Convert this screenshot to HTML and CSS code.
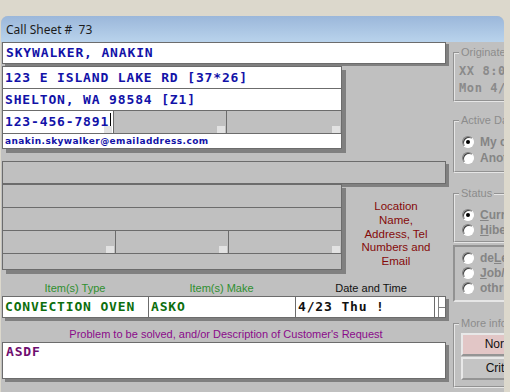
FILE: index.html
```html
<!DOCTYPE html>
<html lang="en">
<head>
<meta charset="UTF-8">
<title>Call Sheet</title>
<link rel="stylesheet" href="styles.css">
</head>
<body>
<div class="window">
  <div class="titlebar">Call Sheet #  73</div>
  <div class="client">
    <div class="main">
      <div class="field name mono">SKYWALKER, ANAKIN</div>

      <div class="block block-a">
        <div class="row tall mono">123 E ISLAND LAKE RD [37*26]</div>
        <div class="row tall mono">SHELTON, WA 98584 [Z1]</div>
        <div class="row tall3 cells">
          <div class="cell white mono">123-456-7891<span class="caret"></span><span class="grip"></span></div>
          <div class="cell"><span class="grip"></span></div>
          <div class="cell last"><span class="grip"></span></div>
        </div>
        <div class="row email">anakin.skywalker@emailaddress.com</div>
      </div>

      <div class="field wide"></div>

      <div class="lower">
        <div class="block block-b">
          <div class="row tall3 gray"></div>
          <div class="row tall3 gray"></div>
          <div class="row tall3 cells">
            <div class="cell gray"><span class="grip"></span></div>
            <div class="cell gray"><span class="grip"></span></div>
            <div class="cell gray last"><span class="grip"></span></div>
          </div>
          <div class="row short gray"></div>
        </div>
        <div class="location">Location<br>Name,<br>Address, Tel<br>Numbers and<br>Email</div>
      </div>

      <div class="labels">
        <span class="lbl-type">Item(s) Type</span>
        <span class="lbl-make">Item(s) Make</span>
        <span class="lbl-date">Date and Time</span>
      </div>
      <div class="items">
        <div class="item type mono">CONVECTION OVEN</div>
        <div class="item make mono">ASKO</div>
        <div class="item date mono">4/23 Thu !</div>
        <div class="spin"><span></span><span></span></div>
      </div>

      <div class="problem-label">Problem to be solved, and/or Description of Customer's Request</div>
      <div class="field problem mono">ASDF</div>
    </div>

    <div class="side">
      <fieldset class="group orig">
        <legend>Originated</legend>
        <div class="orig-line mono">XX 8:07 AM</div>
        <div class="orig-line mono">Mon 4/23</div>
      </fieldset>

      <fieldset class="group active">
        <legend>Active Date</legend>
        <div class="radio"><span class="dot on"></span>My call</div>
        <div class="radio"><span class="dot"></span>Another</div>
      </fieldset>

      <fieldset class="group status">
        <legend>Status</legend>
        <div class="radio"><span class="dot on"></span><u>C</u>urrent</div>
        <div class="radio"><span class="dot"></span><u>H</u>ibernate</div>
      </fieldset>

      <div class="sunken">
        <div class="radio"><span class="dot"></span>de<u>L</u>eted</div>
        <div class="radio"><span class="dot"></span><u>J</u>ob/Done</div>
        <div class="radio"><span class="dot"></span>othr</div>
      </div>

      <fieldset class="group more">
        <legend>More info</legend>
        <div class="btn pink">Normal</div>
        <div class="btn">Critical</div>
      </fieldset>
    </div>
  </div>
</div>
</body>
</html>
```

FILE: styles.css
```css
body {
  margin: 0;
  overflow: hidden;
  background-color: #dcd8cc;
  font-family: "Liberation Sans", Arial, sans-serif;
}

.window {
  margin-top: 16px;
  margin-left: 1px;
  width: 503px;
  height: 376px;
  border-radius: 7px 7px 0 0;
  overflow: hidden;
  background-color: #c0c0c0;
}

.titlebar {
  height: 26px;
  line-height: 27px;
  padding-left: 5px;
  background: linear-gradient(#9bb7da, #b9d3ec);
  font-family: "Noto Sans", "Open Sans", sans-serif;
  font-size: 12px;
  color: #1c1c1c;
  white-space: pre;
}

.client {
  display: flex;
  height: 350px;
}

.main {
  flex: none;
  width: 448px;
  padding-left: 1px;
}

.side {
  flex: none;
  width: 54px;
  overflow: hidden;
}

/* monospace data font */
.mono {
  font-family: "DejaVu Sans Mono", "Liberation Mono", monospace;
  font-weight: bold;
  font-size: 13px;
  letter-spacing: 0.85px;
  white-space: nowrap;
}

.field {
  box-sizing: border-box;
  border: 1px solid #6c6c6c;
  background-color: #fff;
}

.name {
  width: 444px;
  height: 22px;
  line-height: 20px;
  padding-left: 3px;
  color: #1212a8;
  box-shadow: 3px 2px 0 #808080;
}

.block {
  box-sizing: border-box;
  width: 340px;
  border: 1px solid #6c6c6c;
  border-bottom: none;
  box-shadow: 4px 4px 0 #808080;
}

.block-a {
  margin-top: 2px;
}

.row {
  box-sizing: border-box;
  border-bottom: 1px solid #6c6c6c;
  background-color: #fff;
  color: #1212a8;
  padding-left: 2px;
}

.row.tall {
  height: 22px;
  line-height: 21px;
}

.row.tall3 {
  height: 23px;
  line-height: 22px;
}

.row.short {
  height: 16px;
}

.row.gray {
  background-color: #c0c0c0;
}

.row.email {
  height: 15px;
  line-height: 14px;
  font-family: "DejaVu Sans", Verdana, sans-serif;
  font-weight: bold;
  font-size: 9px;
  letter-spacing: 0.42px;
  color: #1212a8;
}

.cells {
  display: flex;
  padding-left: 0;
  background-color: #c0c0c0;
}

.cell {
  position: relative;
  box-sizing: border-box;
  width: 113px;
  border-right: 1px solid #6c6c6c;
  padding-left: 2px;
}

.cell.white {
  width: 111px;
  background-color: #fff;
}

.cell.last {
  width: 114px;
  border-right: none;
}

.block-b .cell {
  width: 113px;
}

.block-b .cell.last {
  width: 112px;
}

.grip {
  position: absolute;
  right: 1px;
  bottom: 0;
  width: 8px;
  height: 7px;
  background-color: #e2e2e2;
}

.caret {
  display: inline-block;
  width: 1px;
  height: 17px;
  margin-left: 1px;
  vertical-align: -4px;
  background-color: #000;
}

.wide {
  margin-top: 12px;
  width: 444px;
  height: 23px;
  background-color: #c0c0c0;
  box-shadow: 3px 3px 0 #808080;
}

.lower {
  display: flex;
}

.location {
  width: 100px;
  margin-left: 4px;
  padding-top: 16px;
  text-align: center;
  font-size: 11.5px;
  line-height: 13.8px;
  color: #850a0a;
}

.labels {
  display: flex;
  margin-top: 10px;
  height: 16px;
  line-height: 16px;
  font-size: 11px;
}

.labels span {
  text-align: center;
}

.lbl-type {
  width: 146px;
  color: #2f8f2f;
}

.lbl-make {
  width: 147px;
  color: #2f8f2f;
}

.lbl-date {
  width: 152px;
  color: #111;
}

.items {
  display: flex;
  width: 444px;
  height: 22px;
  box-shadow: 3px 3px 0 #808080;
}

.item {
  box-sizing: border-box;
  height: 22px;
  line-height: 20px;
  padding-left: 2px;
  border: 1px solid #6c6c6c;
  border-right: none;
  background-color: #fff;
}

.item.type {
  width: 146px;
  color: #0d6e0d;
}

.item.make {
  width: 147px;
  color: #0d6e0d;
}

.item.date {
  width: 139px;
  color: #111;
}

.spin {
  display: flex;
  flex-direction: column;
  box-sizing: border-box;
  width: 12px;
  border: 1px solid #6c6c6c;
  background-color: #fff;
}

.spin span {
  flex: 1;
  border-left: 1px solid #808080;
  margin-left: 3px;
}

.spin span:first-child {
  border-bottom: 1px solid #808080;
}

.problem-label {
  margin-top: 8px;
  height: 16px;
  line-height: 16px;
  text-align: center;
  font-size: 11px;
  color: #8a0a8a;
}

.problem {
  width: 444px;
  height: 37px;
  padding: 1px 3px;
  color: #6e0d6e;
  line-height: 16px;
  box-shadow: 3px 3px 0 #808080;
}

/* right hand panel */
.group {
  width: 90px;
  margin: 4px 0 0 3px;
  padding: 0 0 0 4px;
  border: 2px groove #e6e6e6;
  min-inline-size: auto;
}

.group legend {
  padding: 0 2px;
  font-size: 11px;
  line-height: 13px;
  color: #8c8c8c;
  white-space: nowrap;
}

.orig {
  padding-top: 4px;
  padding-bottom: 3px;
}

.orig-line {
  height: 17px;
  line-height: 17px;
  font-size: 12px;
  letter-spacing: 0.6px;
  color: #8a8a8a;
}

.active {
  margin-top: 12px;
  padding-top: 7px;
  padding-bottom: 5px;
}

.status {
  margin-top: 14px;
  padding-top: 7px;
  padding-bottom: 4px;
}

.status .radio {
  height: 15px;
}

.sunken {
  box-sizing: border-box;
  width: 90px;
  height: 57px;
  margin: 2px 0 0 3px;
  padding-top: 3px;
  padding-left: 4px;
  border: 2px inset #e6e6e6;
}

.sunken .radio {
  height: 15px;
}

.radio {
  display: flex;
  align-items: center;
  height: 16px;
  padding-left: 3px;
  font-size: 12px;
  font-weight: bold;
  color: #858585;
  white-space: nowrap;
}

.dot {
  box-sizing: border-box;
  position: relative;
  flex: none;
  width: 12px;
  height: 12px;
  margin-right: 6px;
  border-radius: 50%;
  border: 1px solid;
  border-color: #808080 #fff #fff #808080;
  background-color: #fff;
  box-shadow: inset 1px 1px 0 #404040;
}

.dot.on::after {
  content: "";
  position: absolute;
  left: 3px;
  top: 3px;
  width: 4px;
  height: 4px;
  border-radius: 50%;
  background-color: #000;
}

.more {
  margin-top: 15px;
  padding-top: 3px;
  padding-bottom: 6px;
}

.btn {
  box-sizing: border-box;
  width: 86px;
  height: 23px;
  margin-left: 2px;
  line-height: 19px;
  text-align: center;
  font-size: 12px;
  color: #111;
  border: 2px outset #e8e8e8;
  background-color: #c4c4c4;
}

.btn + .btn {
  margin-top: 1px;
}

.btn.pink {
  background-color: #e2c6c6;
}
```
